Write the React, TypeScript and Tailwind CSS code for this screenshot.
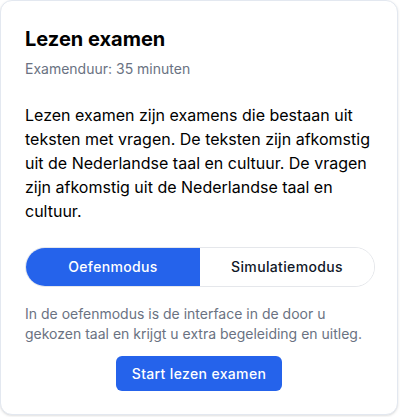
import React from "react";

export default function App() {
  return (
    <div className="min-h-[417px] w-[400px] bg-white" style={{ fontFamily: "Inter, 'Noto Sans', sans-serif" }}>
      <div className="w-[398px] h-[415px] rounded-xl border border-[#e3e8f0] bg-white p-6 shadow-sm">
        <h1 className="text-xl font-bold text-black">Lezen examen</h1>
        <p className="mt-1.5 text-sm text-gray-500">Examenduur: 35 minuten</p>
        <p className="mt-6 text-base leading-6 text-black">
          Lezen examen zijn examens die bestaan uit teksten met vragen. De teksten zijn afkomstig uit de Nederlandse taal en cultuur. De vragen zijn afkomstig uit de Nederlandse taal en cultuur.
        </p>
        <div className="mt-6 flex h-10 w-[350px] overflow-hidden rounded-full border border-gray-200">
          <button className="flex-1 bg-[#2563eb] text-sm font-medium tracking-wide text-white">Oefenmodus</button>
          <button className="flex-1 bg-white text-sm font-medium tracking-wide text-gray-900">Simulatiemodus</button>
        </div>
        <p className="mt-[17px] text-sm text-gray-500">
          In de oefenmodus is de interface in de door u gekozen taal en krijgt u extra begeleiding en uitleg.
        </p>
        <div className="mt-3 flex justify-center">
          <button className="h-[35px] rounded-md bg-[#2563eb] px-4 text-sm font-medium tracking-wide text-white">Start lezen examen</button>
        </div>
      </div>
    </div>
  );
}
